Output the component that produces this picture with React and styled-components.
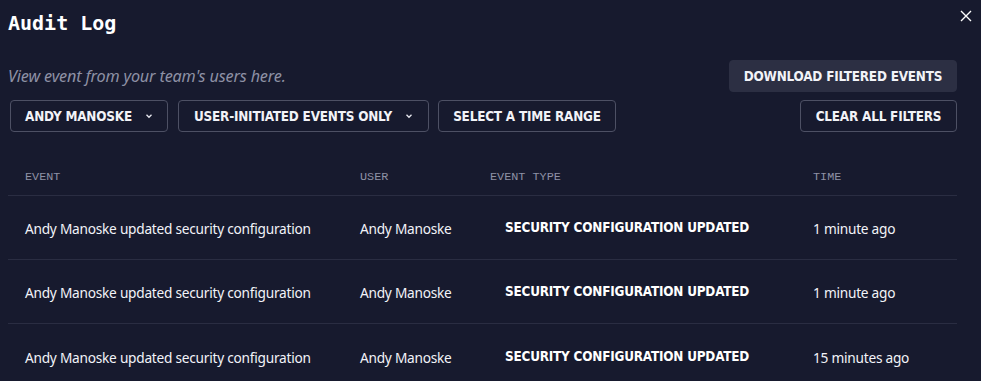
import React from "react";
import styled, { createGlobalStyle } from "styled-components";

const Global = createGlobalStyle`
  html, body { margin: 0; padding: 0; background: #171a2e; }
  body { font-family: "Noto Sans", sans-serif; color: #eef0f6; }
  * { box-sizing: border-box; }
`;

const Page = styled.div`
  position: relative;
  width: 981px;
  height: 381px;
  overflow: hidden;
  padding: 8px 24px 0 8px;
  background: #171a2e;
`;

const Title = styled.h1`
  margin: 0;
  height: 30px;
  display: flex;
  align-items: center;
  font-family: "DejaVu Sans Mono", monospace;
  font-weight: 700;
  font-size: 20px;
  color: #ffffff;
  letter-spacing: 0;
`;

const Close = styled.button`
  position: absolute;
  top: 9px;
  right: 8px;
  width: 14px;
  height: 14px;
  padding: 0;
  border: 0;
  background: none;
  color: #ffffff;
  display: flex;
  align-items: center;
  justify-content: center;
`;

const Bar = styled.div`
  display: flex;
  align-items: center;
  justify-content: space-between;
  margin-top: ${(p) => p.$top}px;
`;

const Group = styled.div`
  display: flex;
  align-items: center;
  gap: ${(p) => p.$gap || 10}px;
`;

const Subtitle = styled.p`
  margin: 0;
  font-style: italic;
  font-size: 16.2px;
  color: #8e91a5;
  font-family: "Noto Sans", sans-serif;
  letter-spacing: -0.15px;
`;

const Button = styled.button`
  flex-shrink: 0;
  height: 32px;
  padding: 0;
  border-radius: 4px;
  border: 1px solid ${(p) => (p.$filled ? "#2c2f43" : "#4d5064")};
  background: ${(p) => (p.$filled ? "#2c2f43" : "transparent")};
  color: #f2f3f8;
  font-family: "DejaVu Sans Condensed", "DejaVu Sans", sans-serif;
  font-weight: 700;
  font-size: 13.4px;
  letter-spacing: -0.2px;
  text-transform: uppercase;
  white-space: nowrap;
  display: flex;
  align-items: center;
  gap: 13px;
  width: ${(p) => (p.$w ? p.$w + "px" : "auto")};
  justify-content: center;
  cursor: pointer;
`;

const Chevron = () => (
  <svg width="8" height="6" viewBox="0 0 8 6" fill="none">
    <path d="M1.5 1.8 L4 4.3 L6.5 1.8" stroke="#e8e9f0" strokeWidth="1.3" />
  </svg>
);

const Table = styled.div`
  margin-top: 26px;
  width: 949px;
`;

const Row = styled.div`
  display: grid;
  grid-template-columns: 335px 130px 323px 1fr;
  align-items: center;
  height: ${(p) => (p.$head ? 38 : 64)}px;
  padding-left: 17px;
  border-bottom: ${(p) => (p.$last ? "none" : "1px solid #2a2d42")};
`;

const Head = styled.div`
  font-family: "Liberation Mono", monospace;
  font-size: 11.8px;
  color: #8e91a5;
  letter-spacing: 0px;
`;

const Cell = styled.div`
  font-family: "Noto Sans", sans-serif;
  font-size: 13.7px;
  color: #f2f3f8;
  letter-spacing: -0.25px;
  padding-top: 2px;
  white-space: nowrap;
`;

const TypeCell = styled.div`
  font-family: "DejaVu Sans Condensed", "DejaVu Sans", sans-serif;
  font-weight: 700;
  font-size: 13.4px;
  color: #ffffff;
  letter-spacing: -0.2px;
  padding-left: 15px;
  text-transform: uppercase;
  white-space: nowrap;
`;

const rows = [
  { time: "1 minute ago" },
  { time: "1 minute ago" },
  { time: "15 minutes ago" },
];

export default function App() {
  return (
    <>
      <Global />
      <Page>
        <Title>Audit Log</Title>
        <Close aria-label="Close">
          <svg width="12" height="12" viewBox="0 0 12 12">
            <path d="M1 1 L11 11 M11 1 L1 11" stroke="#fff" strokeWidth="1.4" />
          </svg>
        </Close>
        <Bar $top={22}>
          <Subtitle>View event from your team's users here.</Subtitle>
          <Button $filled $w={228}>Download filtered events</Button>
        </Bar>
        <Bar $top={8}>
          <Group $gap={10}>
            <Button $w={158} style={{ marginLeft: 2 }}>
              Andy Manoske <Chevron />
            </Button>
            <Button $w={251}>
              User-initiated events only <Chevron />
            </Button>
            <Button $w={178} style={{ marginLeft: -1 }}>Select a time range</Button>
          </Group>
          <Button $w={157}>Clear all filters</Button>
        </Bar>
        <Table>
          <Row $head>
            <Head>EVENT</Head>
            <Head>USER</Head>
            <Head>EVENT TYPE</Head>
            <Head>TIME</Head>
          </Row>
          {rows.map((r, i) => (
            <Row key={i} $last={i === rows.length - 1}>
              <Cell>Andy Manoske updated security configuration</Cell>
              <Cell>Andy Manoske</Cell>
              <TypeCell>Security configuration updated</TypeCell>
              <Cell>{r.time}</Cell>
            </Row>
          ))}
        </Table>
      </Page>
    </>
  );
}
